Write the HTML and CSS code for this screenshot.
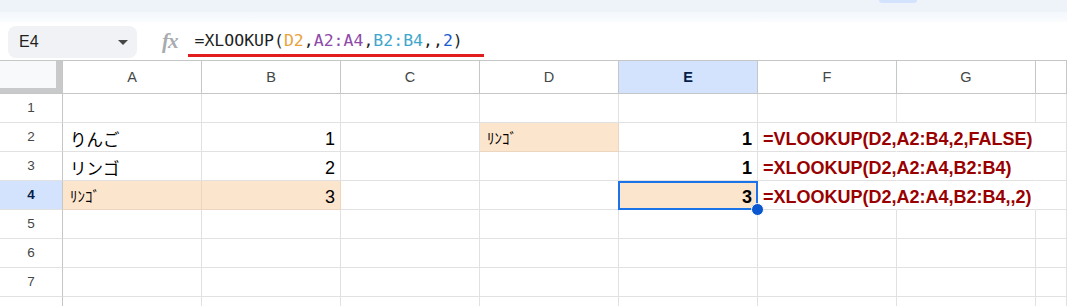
FILE: index.html
```html
<!DOCTYPE html>
<html lang="ja">
<head>
<meta charset="utf-8">
<title>XLOOKUP</title>
<link rel="stylesheet" href="styles.css">
</head>
<body>
<div class="band1"><div class="pill"></div></div>
<div class="band2"></div>
<div class="fbar">
  <div class="namebox"><span class="nb-text">E4</span><span class="tri"></span></div>
  <span class="fx">fx</span>
  <span class="formula"><span>=XLOOKUP(</span><span class="r1">D2</span><span>,</span><span class="r2">A2:A4</span><span>,</span><span class="r3">B2:B4</span><span>,,</span><span class="num">2</span><span>)</span></span>
</div>
<div class="grid">
  <div class="c corner"><div class="corner-in"></div></div>
  <div class="c ch">A</div><div class="c ch">B</div><div class="c ch">C</div><div class="c ch">D</div><div class="c ch sel">E</div><div class="c ch">F</div><div class="c ch">G</div><div class="c ch"></div>

  <div class="c rh">1</div>
  <div class="c"></div><div class="c"></div><div class="c"></div><div class="c"></div><div class="c"></div><div class="c"></div><div class="c"></div><div class="c"></div>

  <div class="c rh">2</div>
  <div class="c jp">りんご</div><div class="c n">1</div><div class="c"></div><div class="c hw peach">ﾘﾝｺﾞ</div><div class="c n b">1</div><div class="c f ov">=VLOOKUP(D2,A2:B4,2,FALSE)</div><div class="c ov"></div><div class="c"></div>

  <div class="c rh">3</div>
  <div class="c jp">リンゴ</div><div class="c n">2</div><div class="c"></div><div class="c"></div><div class="c n b">1</div><div class="c f ov">=XLOOKUP(D2,A2:A4,B2:B4)</div><div class="c ov"></div><div class="c"></div>

  <div class="c rh sel">4</div>
  <div class="c hw peach">ﾘﾝｺﾞ</div><div class="c n peach">3</div><div class="c"></div><div class="c"></div><div class="c n b peach active">3<span class="handle"></span></div><div class="c f ov">=XLOOKUP(D2,A2:A4,B2:B4,,2)</div><div class="c ov"></div><div class="c"></div>

  <div class="c rh">5</div>
  <div class="c"></div><div class="c"></div><div class="c"></div><div class="c"></div><div class="c"></div><div class="c"></div><div class="c"></div><div class="c"></div>

  <div class="c rh">6</div>
  <div class="c"></div><div class="c"></div><div class="c"></div><div class="c"></div><div class="c"></div><div class="c"></div><div class="c"></div><div class="c"></div>

  <div class="c rh">7</div>
  <div class="c"></div><div class="c"></div><div class="c"></div><div class="c"></div><div class="c"></div><div class="c"></div><div class="c"></div><div class="c"></div>

  <div class="c rh">8</div>
  <div class="c"></div><div class="c"></div><div class="c"></div><div class="c"></div><div class="c"></div><div class="c"></div><div class="c"></div><div class="c"></div>
</div>
</body>
</html>
```
FILE: styles.css
```css
html, body {
  margin: 0;
  padding: 0;
  background: #ffffff;
  overflow: hidden;
}
body {
  width: 1067px;
  height: 306px;
  font-family: "Liberation Sans", Arial, sans-serif;
  color: #1f1f1f;
}
.band1 {
  height: 12px;
  background: #eef2f9;
  display: flex;
}
.pill {
  margin-left: 879px;
  width: 38px;
  height: 3px;
  background: #d3e3fd;
  border-radius: 0 0 6px 6px;
}
.band2 {
  height: 10px;
  background: linear-gradient(#f4f7fc, #fafcfe);
}
.fbar {
  height: 38px;
  display: flex;
  align-items: flex-start;
  box-sizing: border-box;
  padding-left: 8px;
}
.namebox {
  margin-top: 4px;
  width: 129px;
  height: 32px;
  background: #f0f2f5;
  border-radius: 8px;
  display: flex;
  align-items: center;
  justify-content: space-between;
  box-sizing: border-box;
  padding: 0 9px 0 11px;
}
.nb-text {
  font-family: "Liberation Sans", Arial, sans-serif;
  font-size: 16px;
  color: #1f1f1f;
}
.tri {
  width: 0;
  height: 0;
  border-left: 5px solid transparent;
  border-right: 5px solid transparent;
  border-top: 5px solid #444746;
}
.fx {
  margin-left: 25px;
  margin-top: 8px;
  font-family: "Liberation Serif", serif;
  font-style: italic;
  font-weight: bold;
  font-size: 21px;
  line-height: 22px;
  color: #a8abaf;
  letter-spacing: -1px;
}
.formula {
  margin-left: 10px;
  height: 35px;
  box-sizing: border-box;
  padding: 9px 21px 0 7px;
  border-bottom: 3px solid #e31c1c;
  font-family: "DejaVu Sans Mono", monospace;
  font-size: 16.5px;
  line-height: 20px;
  color: #1f1f1f;
  white-space: nowrap;
}
.r1 { color: #e8a33d; }
.r2 { color: #8e4aa8; }
.r3 { color: #3ea6cc; }
.num { color: #1a5ccf; }

.grid {
  display: grid;
  grid-template-columns: 63px repeat(7, 139px) 1fr;
  grid-template-rows: 33px repeat(8, 29px);
  border-top: 1px solid #c4c7c5;
}
.c {
  box-sizing: border-box;
  border-right: 1px solid #e1e1e1;
  border-bottom: 1px solid #e1e1e1;
  display: flex;
  align-items: flex-end;
  padding: 0 5px 2px 7px;
  font-family: "Liberation Sans", Arial, sans-serif;
  font-size: 18px;
  line-height: 20px;
  color: #000000;
  white-space: nowrap;
  min-width: 0;
}
.corner {
  background: #c8c9cb;
  padding: 0;
  align-items: flex-start;
  border-right: 1px solid #c4c7c5;
  border-bottom: 1px solid #c4c7c5;
}
.corner-in {
  width: 56px;
  height: 27px;
  background: #f8f9fa;
}
.ch {
  justify-content: center;
  align-items: center;
  padding: 0;
  font-size: 14.5px;
  color: #444746;
  border-right-color: #c4c7c5;
  border-bottom-color: #c4c7c5;
}
.rh {
  justify-content: center;
  align-items: center;
  padding: 0;
  font-size: 13.5px;
  color: #444746;
  border-right-color: #c4c7c5;
}
.sel {
  background: #d3e3fd;
  color: #041e49;
  font-weight: bold;
}
.jp {
  font-family: "Noto Sans CJK JP", sans-serif;
  font-size: 16.5px;
}
.hw {
  font-family: "Noto Sans CJK JP", sans-serif;
  font-size: 15px;
  padding-bottom: 3px;
}
.n {
  justify-content: flex-end;
}
.b {
  font-weight: bold;
}
.peach {
  background: #fce5cd;
  border-color: #ecd6c0;
}
.f {
  font-weight: bold;
  color: #990000;
  padding-left: 5px;
}
.ov {
  border-right-color: transparent;
}
.active {
  position: relative;
}
.active::after {
  content: "";
  position: absolute;
  left: -1px;
  top: 0;
  right: -1px;
  bottom: -1px;
  border: 2px solid #1a73e8;
  pointer-events: none;
}
.handle {
  position: absolute;
  right: -7px;
  bottom: -7px;
  width: 11px;
  height: 11px;
  border-radius: 50%;
  background: #0b57d0;
  border: 1px solid #ffffff;
  z-index: 2;
}
```
